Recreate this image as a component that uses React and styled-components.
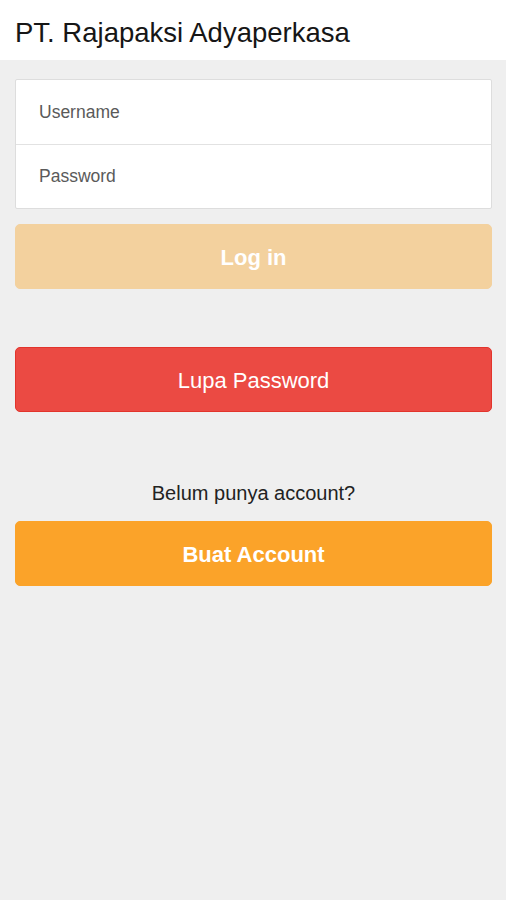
import React from "react";
import styled, { createGlobalStyle } from "styled-components";

const Global = createGlobalStyle`
  html, body { margin: 0; padding: 0; background: #efefef; }
  body { font-family: "Liberation Sans", Arial, sans-serif; }
  * { box-sizing: border-box; }
`;

const Page = styled.div`
  min-height: 900px;
  background: #efefef;
  display: flex;
  flex-direction: column;
`;

const Header = styled.header`
  height: 60px;
  background: #ffffff;
  display: flex;
  align-items: center;
  padding: 0 15px;
`;

const Title = styled.h1`
  margin: 0;
  font-size: 27.5px;
  font-weight: 400;
  color: #161616;
  line-height: 1;
  padding-top: 5px;
`;

const Content = styled.main`
  display: flex;
  flex-direction: column;
  padding: 19px 14px 0 15px;
`;

const Card = styled.div`
  background: #fff;
  border: 1px solid #dddddd;
  border-radius: 2px;
  display: flex;
  flex-direction: column;
`;

const Field = styled.input`
  height: 64px;
  border: none;
  border-top: ${(p) => (p.$divider ? "1px solid #e2e2e2" : "none")};
  padding: 0 0 0 23px;
  font-family: inherit;
  font-size: 17.5px;
  color: #222;
  background: transparent;
  outline: none;
  &::placeholder { color: #5a5a5a; }
`;

const Button = styled.button`
  height: 65px;
  width: 100%;
  border-radius: 5px;
  border: 1px solid ${(p) => p.$border || p.$bg};
  background: ${(p) => p.$bg};
  color: #fff;
  font-family: inherit;
  font-size: 22px;
  font-weight: ${(p) => (p.$bold ? 700 : 400)};
  margin-top: ${(p) => p.$mt || 0}px;
  cursor: pointer;
  padding: 2px 0 0;
`;

const Prompt = styled.p`
  margin: 69px 0 0;
  text-align: center;
  font-size: 20px;
  line-height: 24px;
  color: #222;
`;

export default function App() {
  return (
    <Page>
      <Global />
      <Header>
        <Title>PT. Rajapaksi Adyaperkasa</Title>
      </Header>
      <Content>
        <Card>
          <Field placeholder="Username" />
          <Field $divider type="password" placeholder="Password" />
        </Card>
        <Button $bg="#f3d19e" $bold $mt={15}>Log in</Button>
        <Button $bg="#eb4a43" $border="#e2342c" $mt={58}>Lupa Password</Button>
        <Prompt>Belum punya account?</Prompt>
        <Button $bg="#fba329" $bold $mt={16}>Buat Account</Button>
      </Content>
    </Page>
  );
}
